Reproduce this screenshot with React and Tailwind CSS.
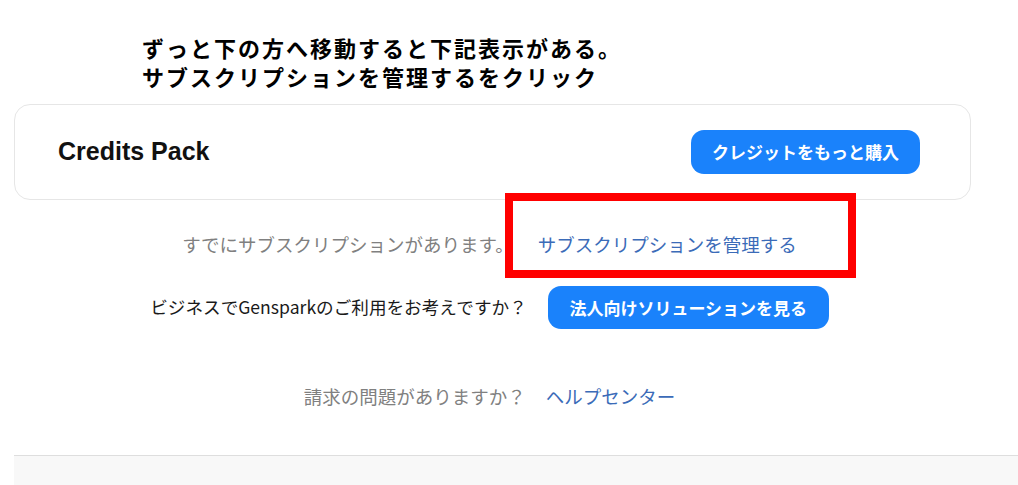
export default function App() {
  const jp = { fontFamily: '"Noto Sans CJK JP", "Noto Sans", sans-serif' };

  return (
    <div className="relative w-[1018px] h-[485px] overflow-hidden bg-white" style={jp}>
      {/* 説明 */}
      <div className="pt-[33px] pl-[142px] text-[22px] font-bold leading-[29px] tracking-[2px] text-black">
        <div>ずっと下の方へ移動すると下記表示がある。</div>
        <div>サブスクリプションを管理するをクリック</div>
      </div>

      <div className="ml-[14px] w-[957px]">
        {/* Credits Pack カード */}
        <div className="mt-[13px] flex h-[96px] items-center justify-between rounded-2xl border border-[#e6e6e6] pl-[43px] pr-[50px]">
          <span
            className="text-[25px] font-bold text-[#111]"
            style={{ fontFamily: '"Liberation Sans", Arial, sans-serif' }}
          >
            Credits Pack
          </span>
          <button className="flex h-[44px] w-[229px] items-center justify-center rounded-[13px] bg-[#1a82fb] text-[17px] font-bold text-white">
            クレジットをもっと購入
          </button>
        </div>

        <div className="pr-[6px]">
          <div className="mt-[32px] flex h-[26px] items-center justify-center gap-[24px] text-[18.5px]">
            <span className="text-[#808080]">すでにサブスクリプションがあります。</span>
            <a className="text-[#3b6bb8]">サブスクリプションを管理する</a>
          </div>

          <div className="mt-[28px] flex items-center justify-center gap-[21px]">
            <span className="text-[17.6px] text-[#1a1a1a]">ビジネスでGensparkのご利用をお考えですか？</span>
            <button className="flex h-[43px] w-[281px] items-center justify-center rounded-[13px] bg-[#1a82fb] text-[17px] font-bold text-white">
              法人向けソリューションを見る
            </button>
          </div>

          <div className="mt-[55px] flex h-[26px] items-center justify-center gap-[20px] text-[18.5px]">
            <span className="text-[#808080]">請求の問題がありますか？</span>
            <a className="text-[#3b6bb8]">ヘルプセンター</a>
          </div>
        </div>
      </div>

      <div className="ml-[14px] mt-[45px] h-[40px] border-t border-[#dedede] bg-[#f8f8f8]" />

      {/* 赤枠 */}
      <div className="absolute left-[505px] top-[193px] h-[85px] w-[351px] border-[8px] border-[#ff0000]" />
    </div>
  );
}
